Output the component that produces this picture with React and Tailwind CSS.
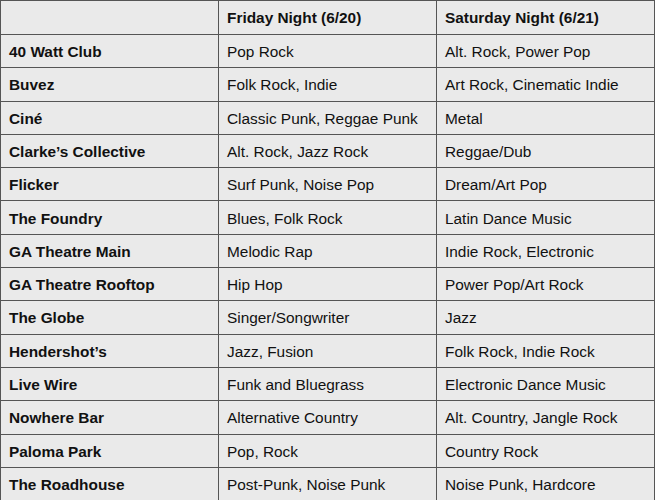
const rows = [
  ['40 Watt Club', 'Pop Rock', 'Alt. Rock, Power Pop'],
  ['Buvez', 'Folk Rock, Indie', 'Art Rock, Cinematic Indie'],
  ['Ciné', 'Classic Punk, Reggae Punk', 'Metal'],
  ['Clarke’s Collective', 'Alt. Rock, Jazz Rock', 'Reggae/Dub'],
  ['Flicker', 'Surf Punk, Noise Pop', 'Dream/Art Pop'],
  ['The Foundry', 'Blues, Folk Rock', 'Latin Dance Music'],
  ['GA Theatre Main', 'Melodic Rap', 'Indie Rock, Electronic'],
  ['GA Theatre Rooftop', 'Hip Hop', 'Power Pop/Art Rock'],
  ['The Globe', 'Singer/Songwriter', 'Jazz'],
  ['Hendershot’s', 'Jazz, Fusion', 'Folk Rock, Indie Rock'],
  ['Live Wire', 'Funk and Bluegrass', 'Electronic Dance Music'],
  ['Nowhere Bar', 'Alternative Country', 'Alt. Country, Jangle Rock'],
  ['Paloma Park', 'Pop, Rock', 'Country Rock'],
  ['The Roadhouse', 'Post-Punk, Noise Punk', 'Noise Punk, Hardcore'],
];

export default function App() {
  return (
    <div className="h-[500px] w-[655px] overflow-hidden bg-[#eaeaea] font-['Liberation_Sans',Arial,sans-serif] text-[15.4px] text-[#111]">
      <table className="w-[655px] table-fixed border-collapse">
        <thead>
          <tr className="h-[34px]">
            <th className="border border-[#555] px-2 pt-px text-left font-bold"></th>
            <th className="border border-[#555] px-2 pt-px text-left font-bold">Friday Night (6/20)</th>
            <th className="border border-[#555] px-2 pt-px text-left font-bold">Saturday Night (6/21)</th>
          </tr>
        </thead>
        <tbody>
          {rows.map(([venue, fri, sat]) => (
            <tr key={venue} className="h-[33.3px]">
              <td className="border border-[#555] px-2 pt-px font-bold">{venue}</td>
              <td className="border border-[#555] px-2 pt-px">{fri}</td>
              <td className="border border-[#555] px-2 pt-px">{sat}</td>
            </tr>
          ))}
        </tbody>
      </table>
    </div>
  );
}
